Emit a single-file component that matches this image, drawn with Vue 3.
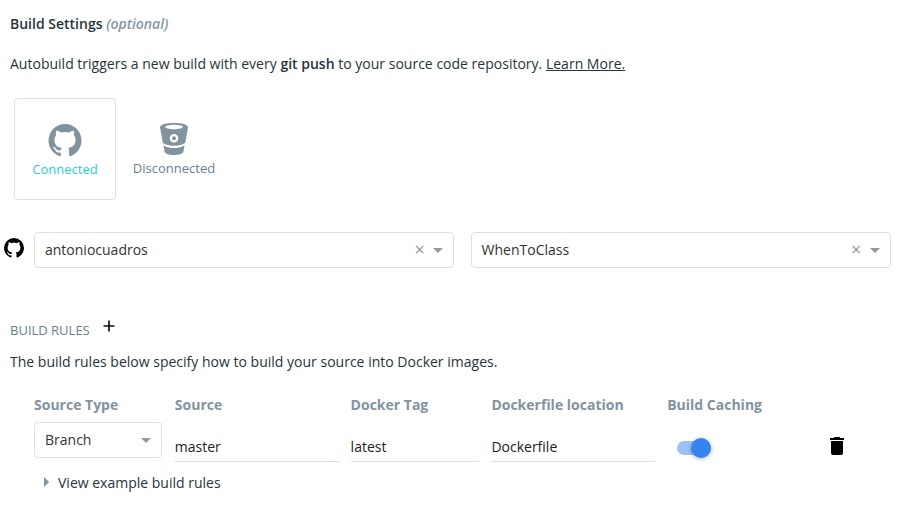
<script setup>
import { ref } from 'vue'

const githubPath =
  'M12,2A10,10 0 0,0 2,12C2,16.42 4.87,20.17 8.84,21.5C9.34,21.58 9.5,21.27 9.5,21C9.5,20.77 9.5,20.14 9.5,19.31C6.73,19.91 6.14,17.97 6.14,17.97C5.68,16.81 5.03,16.5 5.03,16.5C4.12,15.88 5.1,15.9 5.1,15.9C6.1,15.97 6.63,16.93 6.63,16.93C7.5,18.45 8.97,18 9.54,17.76C9.63,17.11 9.89,16.67 10.17,16.42C7.95,16.17 5.62,15.31 5.62,11.5C5.62,10.39 6,9.5 6.65,8.79C6.55,8.54 6.2,7.5 6.75,6.15C6.75,6.15 7.59,5.88 9.5,7.17C10.29,6.95 11.15,6.84 12,6.84C12.85,6.84 13.71,6.95 14.5,7.17C16.41,5.88 17.25,6.15 17.25,6.15C17.8,7.5 17.45,8.54 17.35,8.79C18,9.5 18.38,10.39 18.38,11.5C18.38,15.32 16.04,16.16 13.81,16.41C14.17,16.72 14.5,17.33 14.5,18.26C14.5,19.6 14.5,20.68 14.5,21C14.5,21.27 14.66,21.59 15.17,21.5C19.14,20.16 22,16.42 22,12A10,10 0 0,0 12,2Z'

const repoSelects = ['antoniocuadros', 'WhenToClass']
const rule = ref({ type: 'Branch', source: 'master', tag: 'latest', file: 'Dockerfile', caching: true })
</script>

<template>
  <main class="page">
    <h1 class="title">Build Settings <em>(optional)</em></h1>
    <p class="intro">
      Autobuild triggers a new build with every <strong>git push</strong> to your source code repository.
      <a class="link">Learn More.</a>
    </p>

    <div class="providers">
      <div class="provider active">
        <svg class="github-large" viewBox="2 2 20 20"><path :d="githubPath" /></svg>
        <span>Connected</span>
      </div>
      <div class="provider">
        <svg class="bitbucket" viewBox="0 0 28 32">
          <path
            fill-rule="evenodd"
            d="M14 0C6 0 0 1.5 0 4.2L2.6 19C3 21 8 22.8 14 22.8S25 21 25.4 19L28 4.2C28 1.5 22 0 14 0ZM14 1.8C19 1.8 22.8 2.8 22.8 4S19 6.2 14 6.2 5.2 5.2 5.2 4 9 1.8 14 1.8ZM14 11A4.3 4.3 0 1 1 14 19.6A4.3 4.3 0 1 1 14 11Z"
          />
          <circle cx="14" cy="15.3" r="2" />
          <path d="M3.4 22.3C6 24.2 10 25.1 14 25.1S22 24.2 24.6 22.3L23.3 29C22.8 30.7 19 32 14 32S5.2 30.7 4.7 29Z" />
        </svg>
        <span>Disconnected</span>
      </div>
    </div>

    <div class="repos">
      <svg class="github-small" viewBox="2 2 20 20"><path :d="githubPath" /></svg>
      <div v-for="name in repoSelects" :key="name" class="select">
        <span class="value">{{ name }}</span>
        <span class="clear">×</span>
        <i class="caret"></i>
      </div>
    </div>

    <div class="rules-heading">
      <h2>BUILD RULES</h2>
      <svg class="plus" viewBox="0 0 12 12"><path d="M6 .5V11.5M.5 6H11.5" /></svg>
    </div>
    <p class="rules-text">The build rules below specify how to build your source into Docker images.</p>

    <div class="rules">
      <div class="column">
        <label>Source Type</label>
        <div class="select type">
          <span class="value">{{ rule.type }}</span>
          <i class="caret"></i>
        </div>
      </div>
      <div class="column">
        <label>Source</label>
        <div class="input">{{ rule.source }}</div>
      </div>
      <div class="column">
        <label>Docker Tag</label>
        <div class="input">{{ rule.tag }}</div>
      </div>
      <div class="column">
        <label>Dockerfile location</label>
        <div class="input">{{ rule.file }}</div>
      </div>
      <div class="column">
        <label>Build Caching</label>
        <div class="toggle" @click="rule.caching = !rule.caching">
          <div class="knob" :class="{ off: !rule.caching }"></div>
        </div>
      </div>
      <svg class="trash" viewBox="0 0 14 18">
        <path d="M1 4H13V16A2 2 0 0 1 11 18H3A2 2 0 0 1 1 16ZM0 1H3.5L4.5 0H9.5L10.5 1H14V3H0Z" />
      </svg>
    </div>

    <div class="example"><i class="arrow"></i>View example build rules</div>
  </main>
</template>

<style>
body {
  background: #fff;
}
</style>

<style scoped>
* {
  box-sizing: border-box;
}
.page {
  width: 914px;
  height: 506px;
  padding-top: 14px;
  overflow: hidden;
  font: 14px/20px 'Open Sans', sans-serif;
  color: #27343b;
}
h1,
h2,
p {
  margin: 0;
  font-size: 14px;
}
.title {
  padding-left: 10px;
  font-weight: 600;
}
.title em {
  color: #8397a5;
}
.intro {
  padding: 20px 0 0 10px;
  letter-spacing: 0.007px;
}
strong {
  font-weight: 600;
}
.link {
  text-decoration: underline;
}
.providers {
  display: flex;
  gap: 8px;
  padding: 24px 0 0 14px;
}
.provider {
  display: flex;
  flex-direction: column;
  align-items: center;
  width: 100px;
  height: 102px;
  padding-top: 25px;
  font-size: 13px;
  color: #677f8f;
}
.provider.active {
  width: 102px;
  border: 1px solid #e0e0e0;
  border-radius: 4px;
  color: #1fd3d3;
}
.provider svg {
  flex: none;
  fill: #8293a0;
}
.github-large {
  width: 34px;
  height: 33px;
  margin-bottom: 2px;
}
.bitbucket {
  width: 28px;
  height: 32px;
  margin-bottom: 3px;
}
.repos {
  display: flex;
  padding: 32px 0 0 4px;
}
.github-small {
  width: 20px;
  height: 20px;
  margin: 6px 10px 0 0;
}
.select {
  display: flex;
  align-items: center;
  width: 420px;
  height: 36px;
  margin-right: 16.6px;
  padding: 0 10px;
  border: 1px solid #e0e0e0;
  border-radius: 4px;
  color: #333;
}
.value {
  flex: 1;
}
.clear {
  margin: -2px 8.3px 0 0;
  font-size: 18px;
  line-height: 20px;
  color: #999;
}
.caret {
  border: 5px solid transparent;
  border-top-color: #999;
  border-bottom: 0;
}
.rules-heading {
  display: flex;
  padding: 52px 0 0 10px;
}
.rules-heading h2 {
  width: 93px;
  font-size: 13px;
  font-weight: 400;
  color: #677f8f;
}
.plus {
  width: 12px;
  height: 12px;
  stroke: #111;
  stroke-width: 1.7;
}
.rules-text {
  padding: 12px 0 0 10px;
  letter-spacing: 0.007px;
}
.rules {
  display: grid;
  grid-template-columns: 128.8px 163.8px 128.8px 163.8px 150.8px 14px;
  column-gap: 12px;
  height: 80px;
  padding: 23px 0 0 34px;
}
.rules label {
  display: block;
  font-weight: 700;
  color: #8293a0;
}
.select.type {
  width: 128px;
  margin: 7px 0 0;
}
.input {
  height: 35px;
  margin-top: 12px;
  padding-top: 10px;
  border-bottom: 1px solid #e0e0e0;
  color: #222;
}
.toggle {
  width: 34px;
  height: 14px;
  margin: 26px 0 0 10px;
  border-radius: 7px;
  background: #9bc1f8;
}
.knob {
  width: 20px;
  height: 20px;
  border-radius: 50%;
  background: #3683f0;
  box-shadow: 0 1px 4px rgba(0, 0, 0, 0.3);
  transform: translate(14px, -3px);
}
.knob.off {
  transform: translate(0, -3px);
}
.trash {
  width: 14px;
  height: 18px;
  margin-top: 42px;
}
.example {
  display: flex;
  align-items: center;
  padding: 21px 0 0 44px;
}
.arrow {
  margin: -2px 9px 0 0;
  border: 5px solid transparent;
  border-left-color: #8293a0;
  border-right: 0;
}
</style>
